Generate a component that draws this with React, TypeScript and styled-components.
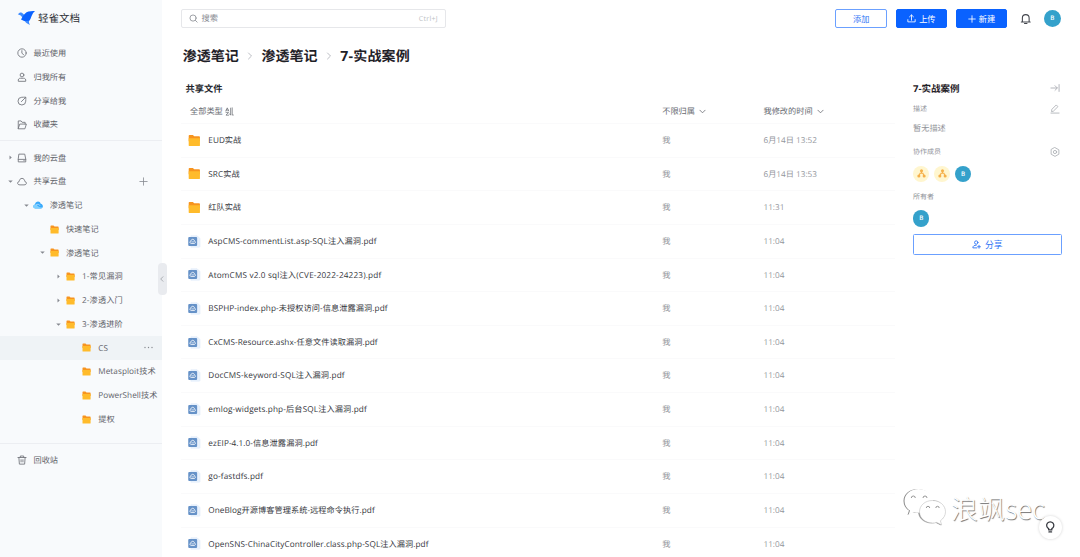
import React from "react";
import styled, { createGlobalStyle } from "styled-components";

const Global = createGlobalStyle`
  * { box-sizing: border-box; }
  html, body { margin: 0; padding: 0; }
  body {
    width: 1080px; height: 557px; overflow: hidden; background: #fff;
    font-family: "Open Sans", "Noto Sans CJK SC", sans-serif;
    font-size: 8.2px; color: #34363c; line-height: 1;
    text-rendering: geometricPrecision;
  }
`;

const Page = styled.div`
  position: relative; display: flex; width: 1080px; height: 557px; overflow: hidden;
`;
const Sidebar = styled.nav`
  flex: none; width: 162px; height: 557px; background: #f8fafc; color: #5f6269;
`;
const Brand = styled.div`
  display: flex; align-items: center; height: 35px; padding-left: 17px; gap: 3px;
  font-size: 10.5px; color: #2c2f36;
`;
const BrandName = styled.span`
  padding-top: 3px; white-space: nowrap;
`;
const Group = styled.div<{ $top: number; $bottom: number; $line?: boolean }>`
  padding: ${(p) => p.$top}px 0 ${(p) => p.$bottom}px;
  border-top: ${(p) => (p.$line ? "1px solid #eceef2" : "0")};
`;
const NavRow = styled.div<{ $level: number; $active?: boolean }>`
  display: flex; align-items: center; height: 23.76px;
  padding-left: ${(p) => 6 + p.$level * 16.2}px;
  background: ${(p) => (p.$active ? "#eff3f6" : "transparent")};
  white-space: nowrap;
`;
const ArrowSlot = styled.span`
  display: flex; flex: none; width: 8px; justify-content: center; margin-right: 2.8px;
`;
const IconSlot = styled.span`
  display: flex; flex: none; width: 10px; justify-content: center; margin-right: 6.7px;
  color: #73767d;
`;
const Label = styled.span<{ $ls?: number }>`
  padding-top: 1.8px; letter-spacing: ${(p) => p.$ls ?? 0}px; white-space: nowrap;
`;
const RowEnd = styled.span<{ $right: number }>`
  display: flex; margin-left: auto; margin-right: ${(p) => p.$right}px; color: #85888f;
`;
const Handle = styled.div`
  position: absolute; left: 157.5px; top: 262.5px; width: 9.5px; height: 32.5px;
  display: flex; align-items: center; justify-content: center;
  border-radius: 4px; background: #e9ebef; color: #8c9097;
`;

const Main = styled.main`
  flex: 1; min-width: 0; display: flex; flex-direction: column;
`;
const TopBar = styled.header`
  display: flex; align-items: center; flex: none; height: 37px; padding: 0 19px 0 18.5px;
`;
const Search = styled.div`
  display: flex; align-items: center; width: 265.5px; height: 19px; padding: 0 7px;
  border: 1px solid #e6e7ea; border-radius: 2px; color: #85888f; gap: 4px;
`;
const Shortcut = styled.span`
  margin-left: auto; padding-top: 1px; font-size: 7px; color: #bcbfc5; letter-spacing: 0.3px;
`;
const Actions = styled.div`
  display: flex; align-items: center; margin-left: auto;
`;
const Button = styled.button<{ $primary?: boolean }>`
  display: flex; align-items: center; justify-content: center; gap: 3px;
  width: 51.5px; height: 19px; padding: 0; margin-right: 8.7px;
  font: inherit; font-size: 8.2px; line-height: 1; border-radius: 2px;
  border: 1px solid ${(p) => (p.$primary ? "#0a62ff" : "#6ba0ff")};
  background: ${(p) => (p.$primary ? "#0a62ff" : "#fff")};
  color: ${(p) => (p.$primary ? "#fff" : "#2f74f5")};
`;
const Bell = styled.span`
  display: flex; margin: 0 12px 0 4px; color: #43464d;
`;
const Avatar = styled.span<{ $soft?: boolean; $size?: number }>`
  display: flex; align-items: center; justify-content: center; flex: none;
  width: ${(p) => p.$size ?? 16.4}px; height: ${(p) => p.$size ?? 16.4}px; border-radius: 50%;
  background: ${(p) => (p.$soft ? "#fff6cf" : "#34a1cb")};
  color: ${(p) => (p.$soft ? "#f5b04a" : "#fff")};
  font-size: 6.2px; font-weight: 600;
`;
const Crumbs = styled.div`
  display: flex; align-items: center; flex: none; height: 38px; padding-left: 20.7px;
  font-size: 14px; font-weight: 700; color: #1f2127;
`;
const CrumbSep = styled.span`
  display: flex; width: 22.8px; justify-content: center; color: #b4b7bd;
`;
const Body = styled.div`
  display: flex; flex: none;
`;
const List = styled.section`
  width: 714px; margin-left: 18.5px; flex: none;
`;
const ListTitle = styled.h2`
  margin: 0; height: 26px; padding: 9px 0 0 5px; font-size: 9.25px; line-height: 9px; font-weight: 600; color: #23252b;
`;
const cols = "481.700px 101.300px 1fr";
const HeadRow = styled.div`
  display: grid; grid-template-columns: ${cols}; align-items: center;
  height: 22px; color: #666970; padding-bottom: 1px;
`;
const HeadCell = styled.div<{ $pad?: number; $gap?: number }>`
  display: flex; align-items: center; gap: ${(p) => p.$gap ?? 5}px; padding-left: ${(p) => p.$pad ?? 0}px;
`;
const FileRow = styled.div`
  display: grid; grid-template-columns: ${cols}; align-items: center;
  height: 33.63px; border-top: 1px solid #fafafb; color: #93969c;
`;
const FileName = styled.div`
  display: flex; align-items: center; padding-left: 7.5px; color: #34363c;
`;
const FileIconSlot = styled.span`
  display: flex; width: 12.5px; margin-right: 7.8px;
`;

const Panel = styled.aside`
  width: 148.5px; margin-left: 18.5px; display: flex; flex-direction: column; color: #8f9298;
`;
const PanelRow = styled.div<{ $h: number; $small?: boolean }>`
  display: flex; align-items: center; justify-content: space-between;
  height: ${(p) => p.$h}px; padding-right: 2px; font-size: ${(p) => (p.$small ? 7 : 8.2)}px;
`;
const PanelTitle = styled.span`
  padding-top: 1.5px; font-size: 9.5px; font-weight: 700; color: #1f2127;
`;
const PanelIcon = styled.span`
  display: flex; color: #a9acb2;
`;
const Avatars = styled.div<{ $h: number }>`
  display: flex; align-items: center; gap: 4.5px; height: ${(p) => p.$h}px;
`;
const ShareButton = styled.button`
  display: flex; align-items: center; justify-content: center; gap: 4px;
  width: 100%; height: 21px; margin-top: 6.5px; padding: 0; border: 1px solid #6ba0ff; border-radius: 1.5px;
  background: #fff; color: #2f74f5; font: inherit; font-size: 8.8px; line-height: 1;
`;
const Watermark = styled.div`
  position: absolute; left: 903px; top: 486px; display: flex; align-items: center; height: 42px; gap: 4px;
  color: #fff; font-family: "Noto Sans CJK SC", sans-serif; font-weight: 300; font-size: 27px;
  text-shadow: 0.8px 0.8px 0.7px #777;
`;
const Fab = styled.div`
  position: absolute; left: 1038.5px; top: 515.5px; width: 23px; height: 23px; border-radius: 50%;
  display: flex; align-items: center; justify-content: center; background: #fff; color: #33363d;
  box-shadow: 0 0 3px rgba(0, 0, 0, 0.18);
`;

type StrokeProps = { size?: number; w?: number; children: React.ReactNode };
const Line = ({ size = 10, w = 1.4, children }: StrokeProps) => (
  <svg width={size} height={size} viewBox="0 0 16 16" fill="none" stroke="currentColor" strokeWidth={w} strokeLinecap="round" strokeLinejoin="round">
    {children}
  </svg>
);

const Clock = () => <Line><circle cx="8" cy="8" r="6.7" /><path d="M7.8 4.2V8.4L10.5 10.6" /></Line>;
const Person = () => <Line><circle cx="8" cy="4.8" r="3" /><path d="M2 14.3C1.3 11.5 3.2 10 5.4 10h5.2c2.2 0 4.1 1.5 3.4 4.3Z" /></Line>;
const ShareOut = () => <Line><path d="M9.2 2H7.6A6.2 6.2 0 1 0 14 8.3V7M7 9l6.6-6.6M10.6 1.9h3.5v3.5" /></Line>;
const FolderOpen = () => <Line><path d="M2 13.500V1.500h4.600l1.600 2.200H13V6.500M2 13.500 4.400 6.500H15l-2.200 7Z" /></Line>;
const Drive = () => <Line><path d="M3.6 1.8h8.8L14 10v4.2H2V10ZM2 10.2h12M11 12.2h.6" /></Line>;
const Cloud = () => <Line size={11}><path d="M4.2 13.4C1.8 13.4.8 11.8 1 10.4c.2-1.500 1.300-2.300 2.500-2.500C3.800 5 5.400 3 8 3s4.200 2 4.500 4.900c1.200.2 2.300 1 2.500 2.500.2 1.400-.8 3-3.200 3Z" /></Line>;
const Trash = () => <Line><path d="M1.500 4h13M5.300 3.800V1.600h5.400v2.200M3 4l.8 10.600h8.400L13 4M6.500 7.500v3.500M9.500 7.500v3.500" /></Line>;
const Plus = ({ size = 9, w = 1.4 }: { size?: number; w?: number }) => <Line size={size} w={w}><path d="M8 1.500v13M1.500 8h13" /></Line>;
const Chevron = ({ size = 7, w = 1.8 }: { size?: number; w?: number }) => <Line size={size} w={w}><path d="M2 5l6 6 6-6" /></Line>;

const BlueCloud = () => (
  <svg width="10" height="8" viewBox="0 0 20 16">
    <path d="M5 15C-1 15-.5 7.500 4 7 4.500 2.500 7.500 1 10 1c3.500 0 5 2.500 5.300 4.500C21 6 21.500 15 15.500 15Z" fill="#38a9fb" />
    <path d="M5 15C-1 15-.5 7.500 4 7c4-.5 5 3 7.500 4.500S17 13 18.500 12.500C18 14 17 15 15 15Z" fill="#7fd0ff" />
    <path d="M6 8c3-2.500 7-1.500 8 1.500" fill="none" stroke="#d8f0ff" strokeWidth="1.300" />
  </svg>
);
const Folder = ({ size = 9 }: { size?: number }) => (
  <svg width={size} height={size} viewBox="0 0 18 18">
    <path d="M1 2.200Q1 1 2.200 1H7L9 3h7q1.200 0 1.200 1.200V10H1Z" fill="#f7941f" />
    <path d="M1 5.800h16.200v10q0 1.200-1.200 1.200H2.200Q1 17 1 15.800Z" fill="#ffbb2b" />
  </svg>
);
const PdfIcon = () => (
  <svg width="13" height="13" viewBox="0 0 26 26">
    <path d="M6 1h13l6 6v16q0 2-2 2H6Z" fill="#e9f2fd" stroke="#d9e8f9" />
    <rect x="0.500" y="3.500" width="18.500" height="19" rx="2" fill="#6692c8" />
    <path d="M6.500 17C3 16.500 3.500 12.500 6 12.300 6.300 9.500 8 8.500 9.800 8.500s3.400 1 3.700 3.800c2.500.2 3 4.200-.5 4.700Z" fill="none" stroke="#fff" strokeWidth="1.700" />
    <path d="M7 13.800h5.500" stroke="#fff" strokeWidth="1.300" />
  </svg>
);
const Org = () => (
  <svg width="9" height="9" viewBox="0 0 16 16" fill="currentColor">
    <circle cx="8" cy="3.200" r="2.700" /><circle cx="3.300" cy="12.500" r="2.700" /><circle cx="12.700" cy="12.500" r="2.700" />
    <path d="M8 4v4M3.500 12l2-4.500h5l2 4.500" fill="none" stroke="currentColor" strokeWidth="2" />
  </svg>
);
const Logo = () => (
  <svg width="18" height="16" viewBox="0 0 18 16">
    <path d="M.8 4.200 3 2.600Q4.600 2 5.800 3.400L8 5.600 5.800 8Q4.200 5 .8 4.200Z" fill="#3d8bff" />
    <path d="M4 9.400Q7.500 2.200 11.500 1.400 14.500.8 18 1 15.600 2.800 14.600 6 13.600 9.600 11.800 11.400 7.500 11.800 4 9.400Z" fill="#0a62ff" />
    <path d="M7.600 11.200 12 10.800Q11.600 12.600 12.900 15 9.700 13.800 7.600 11.200Z" fill="#3d8bff" />
  </svg>
);
const Caret = ({ open }: { open?: boolean }) => (
  <svg width="5" height="5" viewBox="0 0 10 10" fill="#85888f">
    <path d={open ? "M.5 3h9L5 7.500Z" : "M3 .8v8.400L7.500 5Z"} />
  </svg>
);

type Node = { label: string; level: number; icon: React.ReactNode; arrow?: "open" | "closed"; active?: boolean; end?: React.ReactNode; ls?: number };
const shortcuts: Node[] = [
  { label: "最近使用", level: 0, icon: <Clock /> },
  { label: "归我所有", level: 0, icon: <Person /> },
  { label: "分享给我", level: 0, icon: <ShareOut /> },
  { label: "收藏夹", level: 0, icon: <FolderOpen /> },
];
const dots = (
  <svg width="9" height="3" viewBox="0 0 9 3" fill="#85888f"><circle cx="1" cy="1.500" r=".7" /><circle cx="4.500" cy="1.500" r=".7" /><circle cx="8" cy="1.500" r=".7" /></svg>
);
const tree: Node[] = [
  { label: "我的云盘", level: 0, icon: <Drive />, arrow: "closed" },
  { label: "共享云盘", level: 0, icon: <Cloud />, arrow: "open", end: <RowEnd $right={14}><Plus /></RowEnd> },
  { label: "渗透笔记", level: 1, icon: <BlueCloud />, arrow: "open" },
  { label: "快速笔记", level: 2, icon: <Folder /> },
  { label: "渗透笔记", level: 2, icon: <Folder />, arrow: "open" },
  { label: "1-常见漏洞", level: 3, icon: <Folder />, arrow: "closed", ls: 0.1 },
  { label: "2-渗透入门", level: 3, icon: <Folder />, arrow: "closed", ls: 0.1 },
  { label: "3-渗透进阶", level: 3, icon: <Folder />, arrow: "open", ls: 0.1 },
  { label: "CS", level: 4, icon: <Folder />, active: true, end: <RowEnd $right={9.5}>{dots}</RowEnd>, ls: 0.15 },
  { label: "Metasploit技术", level: 4, icon: <Folder />, ls: 0.06 },
  { label: "PowerShell技术", level: 4, icon: <Folder />, ls: 0.03 },
  { label: "提权", level: 4, icon: <Folder /> },
];
const NavItem = ({ n }: { n: Node }) => (
  <NavRow $level={n.level} $active={n.active}>
    <ArrowSlot>{n.arrow && <Caret open={n.arrow === "open"} />}</ArrowSlot>
    <IconSlot>{n.icon}</IconSlot>
    <Label $ls={n.ls}>{n.label}</Label>
    {n.end}
  </NavRow>
);

type FileItem = { name: string; time: string; folder?: boolean; ls?: number };
const files: FileItem[] = [
  { name: "EUD实战", time: "6月14日 13:52", folder: true, ls: 0.03 },
  { name: "SRC实战", time: "6月14日 13:53", folder: true, ls: 0.06 },
  { name: "红队实战", time: "11:31", folder: true },
  { name: "AspCMS-commentList.asp-SQL注入漏洞.pdf", time: "11:04", ls: 0.11 },
  { name: "AtomCMS v2.0 sql注入(CVE-2022-24223).pdf", time: "11:04", ls: 0.17 },
  { name: "BSPHP-index.php-未授权访问-信息泄露漏洞.pdf", time: "11:04", ls: 0.08 },
  { name: "CxCMS-Resource.ashx-任意文件读取漏洞.pdf", time: "11:04", ls: 0.06 },
  { name: "DocCMS-keyword-SQL注入漏洞.pdf", time: "11:04", ls: 0.15 },
  { name: "emlog-widgets.php-后台SQL注入漏洞.pdf", time: "11:04", ls: 0.13 },
  { name: "ezEIP-4.1.0-信息泄露漏洞.pdf", time: "11:04", ls: 0.08 },
  { name: "go-fastdfs.pdf", time: "11:04", ls: 0.15 },
  { name: "OneBlog开源博客管理系统-远程命令执行.pdf", time: "11:04", ls: 0.06 },
  { name: "OpenSNS-ChinaCityController.class.php-SQL注入漏洞.pdf", time: "11:04", ls: 0.08 },
];

const WeChat = () => (
  <svg width="44" height="40" viewBox="0 0 44 40" style={{ overflow: "visible", filter: "drop-shadow(-0.3px 0.7px 0.5px #888)" }}>
    <path d="M15.500 2C7.500 2 1.500 7.300 1.500 14c0 4 2 7.500 5.500 9.600L5.500 28l5.300-2.800c1.500.4 3 .6 4.700.6C23.500 25.800 30 20.500 30 14S23.500 2 15.500 2Z" fill="#fff" />
    <path d="M29.500 13.500c-7.500 0-13 5-13 11.300S22 36 29.500 36c1.500 0 3-.2 4.200-.6l5 2.600-1.300-4.200c3-2.200 5.100-5.300 5.100-9 0-6.300-5.500-11.300-13-11.300Z" fill="#fff" stroke="#b5b5b5" strokeWidth=".5" />
    <path d="M8.300 11a2 2 0 0 1 4 0M20 11a2 2 0 0 1 4 0M23.300 21a1.700 1.700 0 0 1 3.400 0M32.800 21a1.700 1.700 0 0 1 3.400 0" fill="none" stroke="#8a8a8a" strokeWidth=".9" />
  </svg>
);

export default function App() {
  return (
    <>
      <Global />
      <Page>
        <Sidebar>
          <Brand><Logo /><BrandName>轻雀文档</BrandName></Brand>
          <Group $top={6.4} $bottom={4}>{shortcuts.map((n) => <NavItem key={n.label} n={n} />)}</Group>
          <Group $top={4.500} $bottom={12} $line>{tree.map((n, i) => <NavItem key={i} n={n} />)}</Group>
          <Group $top={4.500} $bottom={0} $line><NavItem n={{ label: "回收站", level: 0, icon: <Trash /> }} /></Group>
        </Sidebar>
        <Main>
          <TopBar>
            <Search>
              <Line size={9} w={1.400}><circle cx="7.200" cy="7.200" r="5.500" /><path d="m11.500 11.500 3 3" /></Line>
              <Label>搜索</Label>
              <Shortcut>Ctrl+J</Shortcut>
            </Search>
            <Actions>
              <Button><Label>添加</Label></Button>
              <Button $primary>
                <Line size={9} w={1.500}><path d="M8 11V2M4.500 5 8 1.700 11.500 5M1.500 10v4h13v-4" /></Line>
                <Label>上传</Label>
              </Button>
              <Button $primary><Plus size={8} w={1.700} /><Label>新建</Label></Button>
              <Bell><Line size={11.500} w={1.500}><path d="M1.800 12.500h12.400M3.300 12.300V7a4.700 4.700 0 0 1 9.400 0v5.300M6.300 14.500h3.400" /></Line></Bell>
              <Avatar $size={17.5}>B</Avatar>
            </Actions>
          </TopBar>
          <Crumbs>
            <Label>渗透笔记</Label>
            <CrumbSep><Line size={8} w={1.800}><path d="m5 2 6 6-6 6" /></Line></CrumbSep>
            <Label>渗透笔记</Label>
            <CrumbSep><Line size={8} w={1.800}><path d="m5 2 6 6-6 6" /></Line></CrumbSep>
            <Label $ls={0.2}>7-实战案例</Label>
          </Crumbs>
          <Body>
            <List>
              <ListTitle>共享文件</ListTitle>
              <HeadRow>
                <HeadCell $pad={9.5} $gap={2.5}>
                  <Label>全部类型</Label>
                  <Line size={9} w={1.300}><path d="M1.500 7 4 1.500 6.500 7M2.300 5.500h3.400M1.800 9.500h4.400L1.800 14.500h4.600M10 2v12.500L7.800 12M12.800 1.500v12.800h2" /></Line>
                </HeadCell>
                <HeadCell $gap={4}><Label>不限归属</Label><Chevron /></HeadCell>
                <HeadCell $gap={4}><Label>我修改的时间</Label><Chevron /></HeadCell>
              </HeadRow>
              {files.map((f) => (
                <FileRow key={f.name}>
                  <FileName>
                    <FileIconSlot>{f.folder ? <Folder size={13} /> : <PdfIcon />}</FileIconSlot>
                    <Label $ls={f.ls}>{f.name}</Label>
                  </FileName>
                  <HeadCell><Label>我</Label></HeadCell>
                  <HeadCell><Label>{f.time}</Label></HeadCell>
                </FileRow>
              ))}
            </List>
            <Panel>
              <PanelRow $h={26}>
                <PanelTitle>7-实战案例</PanelTitle>
                <PanelIcon><Line size={10}><path d="M1.500 8h10M8 4.300 11.700 8 8 11.700M14.500 2.500v11" /></Line></PanelIcon>
              </PanelRow>
              <PanelRow $h={16} $small>
                <Label>描述</Label>
                <PanelIcon><Line size={10} w={1.300}><path d="M2.500 11.500 3 8.500 10 1.500l2.700 2.700-7 7ZM1.500 14.500h13" /></Line></PanelIcon>
              </PanelRow>
              <PanelRow $h={21.5}><Label>暂无描述</Label></PanelRow>
              <PanelRow $h={27} $small>
                <Label>协作成员</Label>
                <PanelIcon><Line size={10} w={1.300}><path d="M8 1 14.200 4.500v7L8 15l-6.200-3.500v-7Z" /><circle cx="8" cy="8" r="2.600" /></Line></PanelIcon>
              </PanelRow>
              <Avatars $h={17}><Avatar $soft><Org /></Avatar><Avatar $soft><Org /></Avatar><Avatar>B</Avatar></Avatars>
              <PanelRow $h={27.5} $small><Label>所有者</Label></PanelRow>
              <Avatars $h={17}><Avatar>B</Avatar></Avatars>
              <ShareButton>
                <Line size={9} w={1.600}><circle cx="7.500" cy="4.500" r="3" /><path d="M8.500 14H1.500C1.500 10.500 4 9.300 7.500 9.300M10 12h5M12.500 9.500V14.500" /></Line>
                <Label>分享</Label>
              </ShareButton>
            </Panel>
          </Body>
        </Main>
        <Handle><Line size={6} w={1.800}><path d="M10.500 2 4.500 8l6 6" /></Line></Handle>
        <Watermark><WeChat /><Label>浪飒sec</Label></Watermark>
        <Fab><Line size={12.500} w={1.600}><path d="M6 11.500V9.800a4.600 4.600 0 1 1 4 0v1.700ZM6.300 14h3.400" /></Line></Fab>
      </Page>
    </>
  );
}
